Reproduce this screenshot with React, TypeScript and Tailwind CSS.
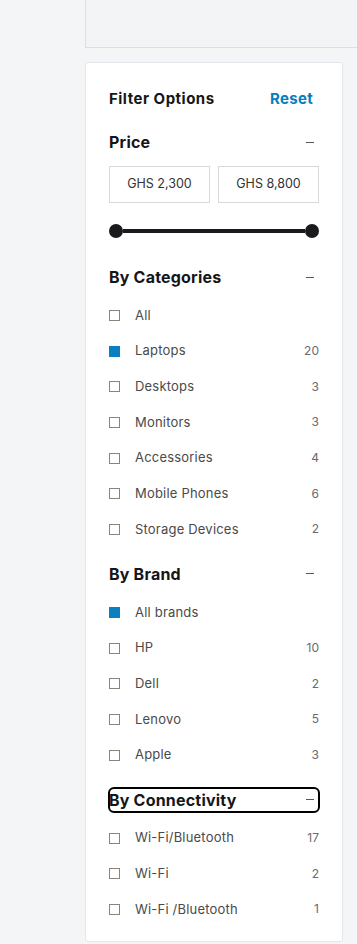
import { ReactNode } from "react";

type Item = { label: string; count?: number; checked?: boolean };

const categories: Item[] = [
  { label: "All" },
  { label: "Laptops", count: 20, checked: true },
  { label: "Desktops", count: 3 },
  { label: "Monitors", count: 3 },
  { label: "Accessories", count: 4 },
  { label: "Mobile Phones", count: 6 },
  { label: "Storage Devices", count: 2 },
];

const brands: Item[] = [
  { label: "All brands", checked: true },
  { label: "HP", count: 10 },
  { label: "Dell", count: 2 },
  { label: "Lenovo", count: 5 },
  { label: "Apple", count: 3 },
];

const connectivity: Item[] = [
  { label: "Wi-Fi/Bluetooth", count: 17 },
  { label: "Wi-Fi", count: 2 },
  { label: "Wi-Fi /Bluetooth", count: 1 },
];

const Heading = ({ title, focused }: { title: string; focused?: boolean }) => (
  <div
    className={
      "flex items-center justify-between h-6 " +
      (focused ? "outline-2 outline-black outline-offset-[-1px] rounded-[5px]" : "")
    }
  >
    <h3 className="text-[16px] font-bold text-[#161616] tracking-[0.2px]">{title}</h3>
    <div className="w-[8px] h-px bg-[#555] mr-[5px]" />
  </div>
);

const List = ({ items }: { items: Item[] }) => (
  <div className="mt-[7.7px] flex flex-col">
    {items.map((it) => (
      <label key={it.label} className="flex items-center h-[35.67px] pt-[2px]">
        <span
          className={
            "w-[11px] h-[11px] shrink-0 " +
            (it.checked ? "bg-[#0b80bf]" : "border border-[#8c8478] bg-white")
          }
        />
        <span className="ml-[15px] text-[13px] text-[#4a4a4a] grow tracking-[0.2px]">{it.label}</span>
        {it.count !== undefined && (
          <span className="text-[12px] text-[#6a6a6a]">{it.count}</span>
        )}
      </label>
    ))}
  </div>
);

const Section = ({ children }: { children: ReactNode }) => <div>{children}</div>;

export default function App() {
  return (
    <div
      className="min-h-[944px] bg-[#f4f5f7] pl-[85px] flex flex-col"
      style={{ fontFamily: "Inter, 'Open Sans', sans-serif" }}
    >
      <div className="h-[48px] bg-[#f3f4f6] border-l border-b border-[#dcdee3]" />
      <div className="mt-[14px] w-[258px] bg-white border border-[#e3e6ec] rounded-[3px] px-[23px] pt-[24px] pb-[15px]">
        <div className="flex items-center justify-between h-6">
          <h2 className="text-[15px] font-bold text-[#161616] tracking-[0.5px]">Filter Options</h2>
          <button className="text-[15px] font-bold text-[#0a7dbd] mr-[6px] tracking-[0.3px]">Reset</button>
        </div>

        <div className="mt-[19px]">
          <Heading title="Price" />
          <div className="mt-[12px] grid grid-cols-2 gap-[8px]">
            <div className="h-[37px] border border-[#d9d9d9] flex items-center justify-center text-[12.5px] text-[#333]">
              GHS 2,300
            </div>
            <div className="h-[37px] border border-[#d9d9d9] flex items-center justify-center text-[12.5px] text-[#333]">
              GHS 8,800
            </div>
          </div>
          <div className="mt-[21px] h-[14px] flex items-center">
            <div className="w-[14px] h-[14px] rounded-full bg-[#1a1a1e] shrink-0" />
            <div className="grow h-[4px] bg-[#1a1a1e]" />
            <div className="w-[14px] h-[14px] rounded-full bg-[#1a1a1e] shrink-0" />
          </div>
        </div>

        <div className="mt-[27px]">
          <Section>
            <Heading title="By Categories" />
            <List items={categories} />
          </Section>
        </div>
        <div className="mt-[15.7px]">
          <Heading title="By Brand" />
          <List items={brands} />
        </div>
        <div className="mt-[15.7px]">
          <Heading title="By Connectivity" focused />
          <List items={connectivity} />
        </div>
      </div>
    </div>
  );
}
